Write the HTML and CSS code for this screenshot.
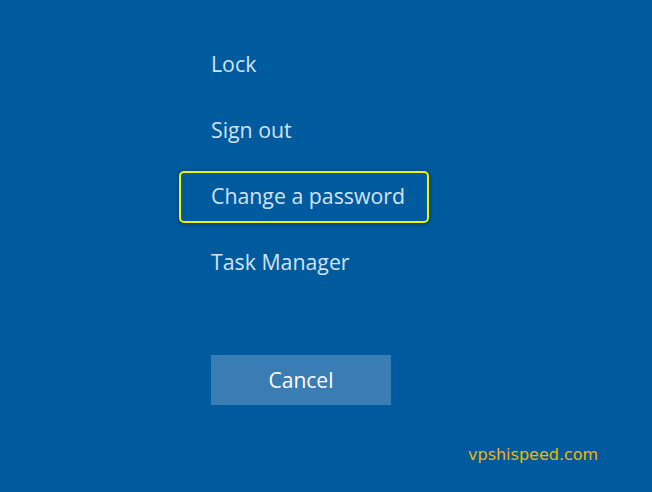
FILE: index.html
```html
<!DOCTYPE html>
<html lang="en">
<head>
<meta charset="UTF-8">
<meta name="viewport" content="width=device-width, initial-scale=1.0">
<title>Security options</title>
<link rel="stylesheet" href="styles.css">
</head>
<body>
<div class="screen">
  <div class="menu">
    <div class="item">Lock</div>
    <div class="item">Sign out</div>
    <div class="item"><span class="focus">Change a password</span></div>
    <div class="item">Task Manager</div>
  </div>
  <button class="cancel">Cancel</button>
  <div class="mark">vpshispeed.com</div>
</div>
</body>
</html>
```
FILE: styles.css
```css
body {
  margin: 0;
  padding: 0;
  background-color: #005a9e;
  font-family: "Open Sans", "Noto Sans", sans-serif;
}
.screen {
  width: 652px;
  height: 492px;
  padding-top: 30px;
  box-sizing: border-box;
}
.menu {
  display: flex;
  flex-direction: column;
  padding-left: 211px;
}
.item {
  height: 66px;
  display: flex;
  align-items: center;
  font-size: 21.3px;
  color: #d2e3f3;
}
.focus {
  margin-left: -32px;
  margin-top: 4px;
  padding: 0 0 4px 30px;
  width: 216px;
  height: 44px;
  box-sizing: content-box;
  display: flex;
  align-items: center;
  border: 2px solid #eef200;
  border-radius: 5px;
  box-shadow: 0 1px 4px rgba(0, 20, 50, 0.5);
}
.cancel {
  display: block;
  margin: 61px 0 0 211px;
  width: 180px;
  height: 50px;
  border: 0;
  background-color: #3a7cb4;
  color: #ffffff;
  font-family: "Open Sans", "Noto Sans", sans-serif;
  font-size: 21px;
}
.mark {
  margin: 40px 0 0 468px;
  color: #f5b400;
  font-family: "DejaVu Sans", Verdana, sans-serif;
  font-size: 16px;
}
```
